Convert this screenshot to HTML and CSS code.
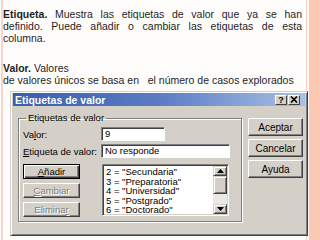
FILE: index.html
```html
<!DOCTYPE html>
<html lang="es">
<head>
<meta charset="utf-8">
<link rel="stylesheet" href="styles.css">
</head>
<body>
<div class="page">
  <div class="main">
    <p class="para first">
      <span class="jline"><b>Etiqueta.</b> Muestra las etiquetas de valor que ya se han</span>
      <span class="jline">definido. Puede añadir o cambiar las etiquetas de esta</span>
      <span class="line">columna.</span>
    </p>
    <p class="para second"><b>Valor.</b> Valores<br>de valores únicos se basa en&nbsp;&nbsp; el número de casos explorados</p>
    <div class="dialog">
      <div class="titlebar">
        <span class="title">Etiquetas de valor</span>
        <div class="tb-btns">
          <span class="tbb">?</span>
          <span class="tbb">
            <svg width="8" height="7" viewBox="0 0 8 7"><path d="M1 0.5 L7 6.5 M7 0.5 L1 6.5" stroke="#000" stroke-width="1.6"/></svg>
          </span>
        </div>
      </div>
      <div class="dbody">
        <fieldset class="group">
          <legend>Etiquetas de valor</legend>
          <div class="row">
            <span class="lbl">Va<u>l</u>or:</span>
            <div class="input short">9</div>
          </div>
          <div class="row">
            <span class="lbl"><u>E</u>tiqueta de valor:</span>
            <div class="input long">No responde</div>
          </div>
          <div class="lower">
            <div class="btncol">
              <div class="btn default"><u>A</u>ñadir</div>
              <div class="btn disabled"><u>C</u>ambiar</div>
              <div class="btn disabled">Elimina<u>r</u></div>
            </div>
            <div class="listbox">
              <div class="items">
                <div>2 = "Secundaria"</div>
                <div>3 = "Preparatoria"</div>
                <div>4 = "Universidad"</div>
                <div>5 = "Postgrado"</div>
                <div>6 = "Doctorado"</div>
              </div>
              <div class="scroll">
                <div class="sbtn"><svg width="7" height="4" viewBox="0 0 7 4"><path d="M0 4 L3.5 0 L7 4 Z" fill="#000"/></svg></div>
                <div class="thumb"></div>
                <div class="track"></div>
                <div class="sbtn"><svg width="7" height="4" viewBox="0 0 7 4"><path d="M0 0 L3.5 4 L7 0 Z" fill="#000"/></svg></div>
              </div>
            </div>
          </div>
        </fieldset>
        <div class="side">
          <div class="btn big">Aceptar</div>
          <div class="btn big">Cancelar</div>
          <div class="btn big">Ayuda</div>
        </div>
      </div>
    </div>
  </div>
  <div class="rail"></div>
</div>
</body>
</html>
```
FILE: styles.css
```css
html, body {
  margin: 0;
  padding: 0;
  background: #fffdfc;
}
.page {
  display: flex;
  width: 320px;
  height: 240px;
  overflow: hidden;
}
.main {
  width: 303px;
  margin-left: 1px;
  border-left: 2px solid #f9d6cd;
  font-family: "Liberation Sans", Arial, sans-serif;
  color: #1e1e1e;
}
.rail {
  flex: 1;
  background: linear-gradient(to right, #f6cfc3 0 1px, #fffdfc 1px 3px, #fcc7b3 3px);
}
.para {
  margin: 0;
  width: 299px;
  font-size: 10.5px;
  line-height: 12px;
}
.jline {
  display: block;
  text-align: justify;
  text-align-last: justify;
}
.line {
  display: block;
}
.para.first { margin-top: 8px; }
.para.second { margin-top: 18px; }
.dialog {
  position: relative;
  z-index: 1;
  margin-top: 5px;
  margin-left: 7px;
  width: 298px;
  height: 145px;
  box-sizing: border-box;
  background: #d4d0c8;
  border: 1px solid;
  border-color: #d4d0c8 #404040 #404040 #d4d0c8;
  box-shadow: inset 1px 1px 0 #fff, inset -1px -1px 0 #808080;
  padding: 1px 2px 2px 1px;
  font-family: "Liberation Sans", Arial, sans-serif;
  font-size: 9.5px;
  color: #000;
}
.titlebar {
  height: 13px;
  margin-left: 1px;
  background: linear-gradient(to right, #3a5eab, #5b7cc4 50%, #a9c0e6);
  display: flex;
  align-items: center;
  justify-content: space-between;
  padding-right: 5px;
}
.title {
  color: #fff;
  font-weight: bold;
  font-size: 10.5px;
  padding-left: 2px;
}
.tb-btns {
  display: flex;
  gap: 1px;
}
.tbb {
  width: 12px;
  height: 10px;
  box-sizing: border-box;
  background: #d4d0c8;
  border: 1px solid;
  border-color: #fff #404040 #404040 #fff;
  display: flex;
  align-items: center;
  justify-content: center;
  font-weight: bold;
  font-size: 9px;
  line-height: 8px;
}
.dbody {
  display: flex;
  align-items: flex-start;
  padding: 6px 0 0 6px;
  gap: 6px;
}
.group {
  margin: 0;
  width: 224px;
  box-sizing: border-box;
  border: 1px solid #808080;
  box-shadow: 1px 1px 0 #fff, inset 1px 1px 0 #fff;
  padding: 3px 4px 4px 4px;
  min-inline-size: 0;
}
.group legend {
  margin-left: 3px;
  padding: 0 2px;
  font-size: 9.5px;
  line-height: 12px;
}
.row {
  display: flex;
  align-items: center;
  margin-bottom: 3px;
}
.lbl {
  width: 78px;
}
.input {
  height: 14px;
  box-sizing: border-box;
  background: #fff;
  border: 1px solid;
  border-color: #808080 #fff #fff #808080;
  box-shadow: inset 1px 1px 0 #404040;
  padding-left: 3px;
  line-height: 12px;
  font-size: 9.5px;
}
.input.short { width: 64px; }
.input.long { width: 129px; }
.lower {
  display: flex;
  gap: 22px;
  margin-top: 6px;
}
.btncol {
  display: flex;
  flex-direction: column;
  gap: 4px;
}
.btn {
  width: 57px;
  height: 15px;
  box-sizing: border-box;
  background: #d4d0c8;
  border: 1px solid;
  border-color: #fff #404040 #404040 #fff;
  box-shadow: inset -1px -1px 0 #808080;
  display: flex;
  align-items: center;
  justify-content: center;
  font-size: 9.5px;
}
.btn.default {
  border: 1px solid #000;
  box-shadow: inset 1px 1px 0 #fff, inset -1px -1px 0 #404040, inset -2px -2px 0 #808080;
}
.btn.disabled {
  color: #808080;
  text-shadow: 1px 1px 0 #fff;
}
.listbox {
  width: 127px;
  height: 52px;
  box-sizing: border-box;
  background: #fff;
  border: 1px solid;
  border-color: #808080 #fff #fff #808080;
  box-shadow: inset 1px 1px 0 #404040, inset -1px -1px 0 #d4d0c8;
  padding: 1px;
  display: flex;
}
.items {
  flex: 1;
  padding: 1px 0 0 2px;
  font-size: 9.5px;
  line-height: 9.6px;
  overflow: hidden;
  white-space: nowrap;
}
.scroll {
  width: 14px;
  display: flex;
  flex-direction: column;
}
.sbtn {
  height: 10px;
  box-sizing: border-box;
  background: #d4d0c8;
  border: 1px solid;
  border-color: #d4d0c8 #404040 #404040 #d4d0c8;
  box-shadow: inset 1px 1px 0 #fff, inset -1px -1px 0 #808080;
  display: flex;
  align-items: center;
  justify-content: center;
}
.thumb {
  height: 18px;
  box-sizing: border-box;
  background: #d4d0c8;
  border: 1px solid;
  border-color: #d4d0c8 #404040 #404040 #d4d0c8;
  box-shadow: inset 1px 1px 0 #fff, inset -1px -1px 0 #808080;
}
.track {
  flex: 1;
  background: #ebe9e5;
}
.side {
  display: flex;
  flex-direction: column;
  gap: 3px;
  margin-top: 6px;
}
.btn.big {
  width: 55px;
  height: 18px;
  font-size: 10px;
}
```
